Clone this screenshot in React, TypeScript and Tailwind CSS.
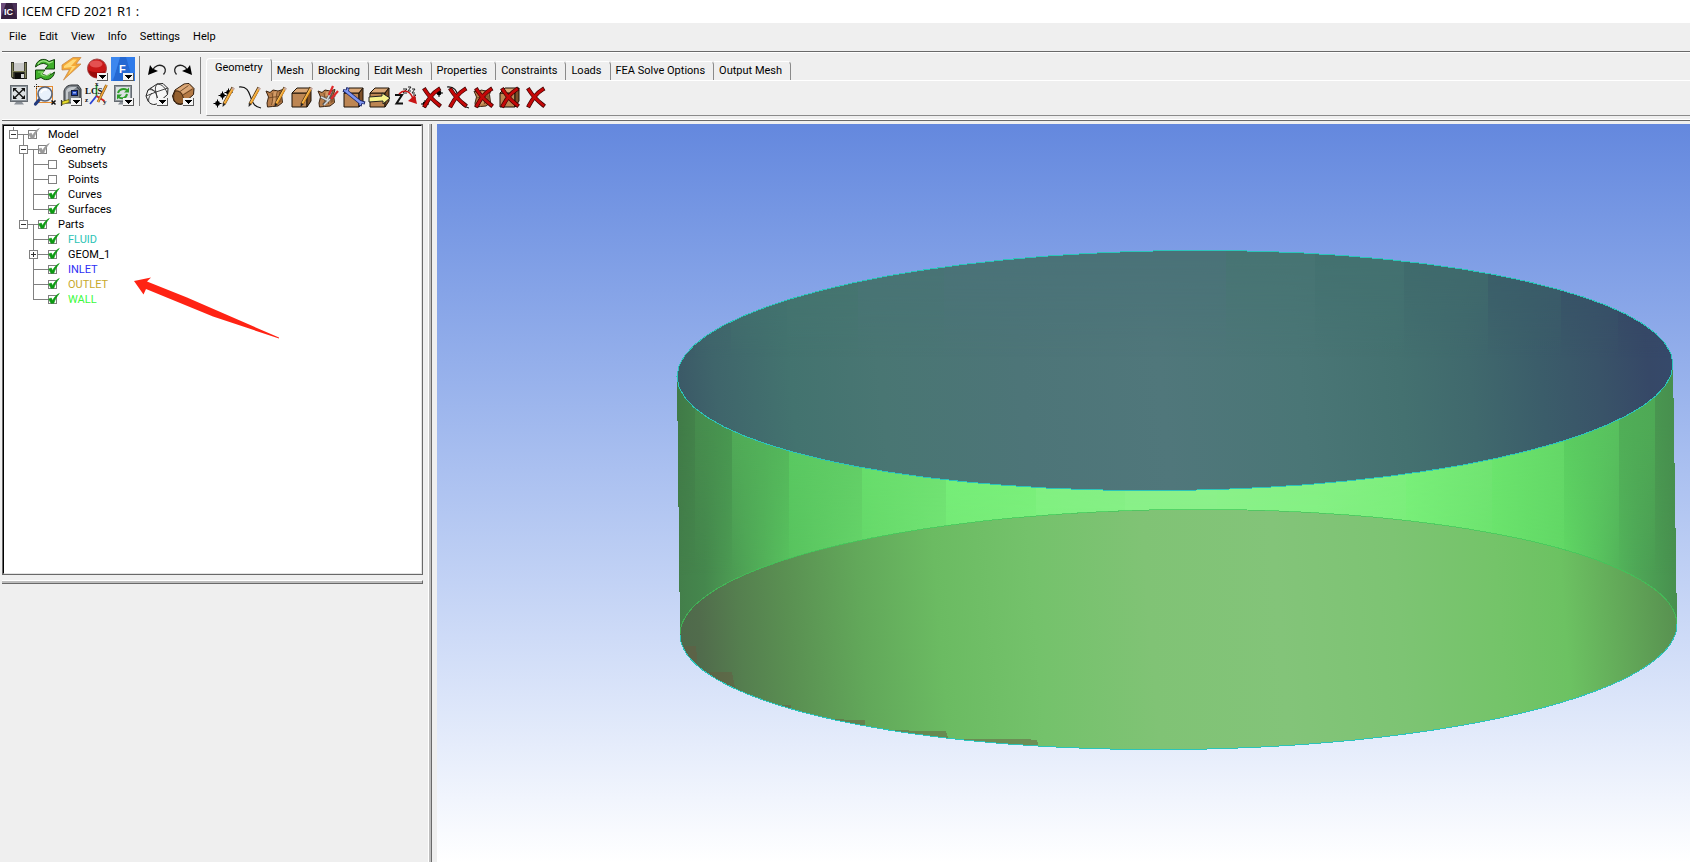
import { useState } from "react";
import type { ReactNode } from "react";

interface IconProps {
  children: ReactNode;
}

function Icon({ children }: IconProps) {
  return (
    <svg className="block h-6 w-6 overflow-visible" viewBox="0 0 24 24" fill="none" aria-hidden>
      {children}
    </svg>
  );
}

// Small "more options" flag in the corner of a tool button.
function MenuFlag() {
  return (
    <g shapeRendering="crispEdges">
      <rect x="12" y="16" width="11" height="8" fill="#5a5a5a" />
      <rect x="12" y="16" width="10" height="7" fill="#f4f4f4" />
      <path d="M14 18h7v1h-1v1h-1v1h-1v1h-1v-1h-1v-1h-1v-1h-1z" fill="#000" />
    </g>
  );
}

function Pencil() {
  return (
    <g>
      <path d="M21 2.5L12 19" stroke="#5a3a10" strokeWidth="3.2" />
      <path d="M21 3.5L12.6 18.6" stroke="#f0a02a" strokeWidth="2" />
      <path d="M20.4 3.2L12 18" stroke="#ffd27a" strokeWidth="0.7" />
      <path d="M20 3.2l2.4 1.2" stroke="#c9a9a0" strokeWidth="2" />
      <path d="M10.6 22l0.2-4 2.6 1.4z" fill="#222" />
    </g>
  );
}

function RedCross() {
  return (
    <g strokeLinecap="square">
      <path d="M5 5Q10 13 19 20M18.5 4.5Q11 9 5 20.5" stroke="#3a0000" strokeWidth="4.2" />
      <path d="M5 5Q10 13 19 20M18.5 4.5Q11 9 5 20.5" stroke="#c40808" strokeWidth="2.8" />
    </g>
  );
}

function Star({ x, y }: { x: number; y: number }) {
  return (
    <g>
      <circle cx={x} cy={y} r="2.4" fill="#000" />
      <path d={`M${x - 4} ${y}h8M${x} ${y - 4}v8`} stroke="#000" />
    </g>
  );
}

function Patch() {
  return (
    <g>
      <path
        d="M2 6l4 1.5 3-2.5 5 1 5-1.5-1.5 5 1 8-4.5 3.5-5.5 0.5-5 0.5-0.5-4 1.5-6z"
        fill="#b97f4c"
        stroke="#3a2412"
      />
      <path d="M10 7l3.5-1-1.5 12-4 2z" fill="#d39c68" />
      <path d="M8 8c1 4 1 7-0.5 12M13.5 6c-1.5 4-1.5 8-1 13M4 13l6-1 8-0.5" stroke="#6b4220" strokeWidth="0.8" />
      <path d="M15 7l2.5-1-1 4 1 6.5-3 2z" fill="#8c5a30" />
    </g>
  );
}

function Cube() {
  return (
    <g strokeLinejoin="round" stroke="#1c1208">
      <path d="M2 8h15v14H2z" fill="#bd8653" />
      <path d="M2 8l5-5h14l-4 5z" fill="#dba877" />
      <path d="M17 8l4-5v13l-4 6z" fill="#7d5029" />
    </g>
  );
}

function Monitor({ children }: IconProps) {
  return (
    <g>
      <rect x="3.5" y="3.5" width="17" height="16" fill="#8e959b" stroke="#666c72" />
      <rect x="5" y="5" width="14" height="13" fill="#dde1e3" />
      <path d="M9 20h6l2 2.5H7z" fill="#8b9198" />
      {children}
    </g>
  );
}

const SaveIcon = () => (
  <Icon>
    <path d="M4 5h16v17H6l-2-2z" fill="#2a2a22" />
    <path d="M5.5 6v14M18.5 6v15" stroke="#85865f" strokeWidth="1.5" />
    <rect x="7" y="5" width="10" height="9" fill="#c9c9c9" />
    <path d="M7 5.5h10" stroke="#eee" />
    <path d="M6 14.5h12" stroke="#77794f" />
    <rect x="8" y="16" width="9" height="6" fill="#0c0c0c" />
    <rect x="14" y="17" width="3" height="4" fill="#d8d8d8" />
  </Icon>
);

const RefreshIcon = () => {
  const arrow = "M2.5 10C3 4 10-0.5 16 4.5L21.5 2.5V12H12L15 8.5C11 5 7 6.5 2.5 10z";
  return (
    <Icon>
      <g fill="#3fae2a" stroke="#123f0c" strokeLinejoin="round">
        <path d={arrow} />
        <path d={arrow} transform="rotate(180 12 12.5)" />
      </g>
      <path d="M5 7C8 3 12 3 16 6l4-1.5" stroke="#a3e689" strokeWidth="1.3" />
      <path d="M5 15h5l-2 2c3 3 7 2 10-1" stroke="#8ddc70" strokeWidth="1.1" />
    </Icon>
  );
};

const BoltIcon = () => (
  <Icon>
    <path d="M3 8L14 0.5h8L17 7h5L4.5 23 10.5 12.5 3 13z" fill="#f4a836" stroke="#c98a4a" strokeWidth="0.8" />
    <path d="M5 9L14 2.5h4L12 9h5L9 18l4-8-8 1z" fill="#ffd978" />
  </Icon>
);

const RecordIcon = () => (
  <Icon>
    <circle cx="12" cy="11.5" r="9.5" fill="#c91818" stroke="#a34a4a" />
    <ellipse cx="11" cy="7" rx="6.5" ry="3.5" fill="#ef6a6a" opacity="0.7" />
    <path d="M3 13c3 10 14 10 18 0-4 3-13 3-18 0z" fill="#9b0c0c" />
    <MenuFlag />
  </Icon>
);

const FluentIcon = () => (
  <Icon>
    <rect width="24" height="24" fill="#2f7bea" />
    <path d="M9 0h6l7 24H2z" fill="#2468d2" />
    <path d="M0 0h9L3 20l-3 4z" fill="#3c87ee" />
    <text x="8" y="16" fill="#fff" fontSize="11" fontWeight="700" fontFamily="Liberation Sans, sans-serif">
      F
    </text>
    <MenuFlag />
  </Icon>
);

const UndoArrow = () => (
  <g>
    <path d="M18.5 17.5C25 10 13 3.5 7.5 13" stroke="#222" strokeWidth="1.3" />
    <path d="M3 18L5 8l2.5 3.5 5.5 2.5z" fill="#000" />
  </g>
);

const UndoIcon = () => (
  <Icon>
    <UndoArrow />
  </Icon>
);

const RedoIcon = () => (
  <Icon>
    <g transform="matrix(-1 0 0 1 24 0)">
      <UndoArrow />
    </g>
  </Icon>
);

const FitIcon = () => (
  <Icon>
    <Monitor>
      <path d="M8 7.5l8 8M16 7.5l-8 8" stroke="#111" strokeWidth="1.3" />
      <path d="M6 6h4l-4 4zM18 6v4l-4-4zM6 17v-4l4 4zM18 17h-4l4-4z" fill="#111" />
    </Monitor>
  </Icon>
);

const ZoomBoxIcon = () => (
  <Icon>
    <rect x="3.5" y="4.5" width="16" height="16" stroke="#e58a2e" />
    <path d="M1 4.5h5M3.5 2v5" stroke="#222" strokeDasharray="1 1" />
    <path d="M6.5 17.5l-4 4.5" stroke="#223a7c" strokeWidth="3.2" strokeLinecap="round" />
    <circle cx="12" cy="12" r="7" fill="#e9f1fb" stroke="#59657a" strokeWidth="1.6" />
    <path d="M8 11c1-3 4-4 6-3" stroke="#fff" strokeWidth="1.6" />
    <path d="M18.5 18.5l4 4M22.5 18.5l-4 4" stroke="#111" strokeWidth="1.5" />
  </Icon>
);

const MeasureIcon = () => (
  <Icon>
    <path d="M5 9c1-4 4-6 8-6h6l3 4v12l-6 2H7l-2-3z" fill="#7e848a" stroke="#2c3034" />
    <path d="M7 9c1-3 3-4 6-4h5l-4 3-5 2v8H7z" fill="#c3c8cc" />
    <path d="M18 5l3 3v11" stroke="#43484d" strokeWidth="1.2" />
    <rect x="12.5" y="8.5" width="6" height="5" fill="#2145b4" stroke="#10183a" />
    <path d="M14 10h3v1.5h-3z" fill="#9db3f5" />
    <path d="M3 19.5l7-2v3l-7 2z" fill="#e8de2c" stroke="#58540a" strokeWidth="0.7" />
    <path d="M2.5 18v6" stroke="#333" strokeWidth="1.2" />
    <MenuFlag />
  </Icon>
);

const LcsIcon = () => (
  <Icon>
    <path d="M11.5 3v12" stroke="#1f9a36" strokeWidth="1.6" />
    <path d="M11.5 14L5 22" stroke="#2a43d4" strokeWidth="1.8" />
    <path d="M11.5 14l8 5" stroke="#d42020" strokeWidth="1.8" />
    <g fontFamily="Liberation Serif, serif" fontWeight="700" fill="#111">
      <text x="0" y="12" fontSize="9">
        LCS
      </text>
      <text x="10" y="4" fontSize="7">
        x
      </text>
      <text x="0" y="20" fontSize="7">
        z
      </text>
      <text x="18" y="22" fontSize="7">
        y
      </text>
    </g>
    <path d="M21.5 3L13 20" stroke="#7a4a10" strokeWidth="2.6" />
    <path d="M21.5 3L13 20" stroke="#f3a93a" strokeWidth="1.6" />
  </Icon>
);

const RedrawIcon = () => (
  <Icon>
    <Monitor>
      <path d="M7 11c1-4 6-5 9-3M16 12c-1 5-6 5-9 3" stroke="#2f9e2a" strokeWidth="2" />
      <path d="M18 5.5v5h-5zM6 17.5v-5h5z" fill="#2f9e2a" />
    </Monitor>
    <MenuFlag />
  </Icon>
);

const WireIcon = () => (
  <Icon>
    <path
      d="M1 14L3 8 12 2l6-0.5 5 5-0.5 6L13 21c-4 3-8 1-10-2z"
      fill="#f6f6f6"
      stroke="#222"
      strokeLinejoin="round"
    />
    <path
      d="M3 8c5-2 10 3 10 13M12 2c5 0 9 4 10.5 10.5M1 14l10-4 12-4M7 11c-3 3-4 7-3 9M11 10L5 6M12 2c-2 3-2 5-1 8l2 11"
      stroke="#333"
      strokeWidth="0.9"
    />
    <MenuFlag />
  </Icon>
);

const SolidIcon = () => (
  <Icon>
    <path
      d="M1.5 14L4 8l9-6 5-0.5 5 5-0.5 6L13 21c-4 3-8 1-10-2z"
      fill="#b57a45"
      stroke="#2a180a"
      strokeLinejoin="round"
    />
    <path d="M5 8l8.5-5.5 4-0.5 4 4-9.5 6C10 9 8 8 5 8z" fill="#dba878" />
    <path d="M4 9c6-1 9 5 9 12-5 2-8 0-10-3-1-3 0-6 1-9z" fill="#94602f" stroke="#2a180a" strokeWidth="0.8" />
    <path d="M9 9.5l8.5-6M12 13l9.5-6" stroke="#5e3a1a" strokeWidth="0.8" />
    <MenuFlag />
  </Icon>
);

const geometryTools: { label: string; icon: ReactNode }[] = [
  {
    label: "Create Point",
    icon: (
      <>
        <Star x={5.5} y={18.5} />
        <Star x={10.5} y={10.5} />
        <Star x={16.5} y={7.5} />
        <Pencil />
      </>
    ),
  },
  {
    label: "Create/Modify Curve",
    icon: (
      <>
        <path d="M1 2C10 1 11 8 13 13c2 6 4 9 10 10" stroke="#111" strokeWidth="1.2" />
        <Pencil />
      </>
    ),
  },
  {
    label: "Create/Modify Surface",
    icon: (
      <>
        <Patch />
        <Pencil />
      </>
    ),
  },
  {
    label: "Create Body",
    icon: (
      <>
        <Cube />
        <Pencil />
      </>
    ),
  },
  {
    label: "Create/Modify Faceted",
    icon: (
      <>
        <Patch />
        <path d="M5 12l6 3 5-9M7 20l7-6 5-4" stroke="#555" strokeWidth="2.8" />
        <path d="M5 12l6 3 4-8M8 20l6-6" stroke="#d4dadd" strokeWidth="1.6" />
        <path d="M13 10l4-9M15 14l7-8" stroke="#e02a2a" strokeWidth="2.2" />
      </>
    ),
  },
  {
    label: "Repair Geometry",
    icon: (
      <>
        <Cube />
        <path d="M4 6l15 12" stroke="#1a2468" strokeWidth="4" />
        <path d="M1 5.5l4 1 1-4M18 21l1-4 4 1" stroke="#1a2468" strokeWidth="3.2" />
        <path d="M4 6l15 12" stroke="#7f97f0" strokeWidth="2.4" />
        <path d="M2 5.5l3 1 1-3M18 20l1-3 3 1" stroke="#7f97f0" strokeWidth="1.7" />
      </>
    ),
  },
  {
    label: "Transform Geometry",
    icon: (
      <>
        <Cube />
        <path d="M1 12l13-1V8l8 5-7 6v-3l-14 1z" fill="#f6f28a" stroke="#222" />
      </>
    ),
  },
  {
    label: "Restore Dormant",
    icon: (
      <>
        <path d="M1 10h7L2.5 18.5H9" stroke="#111" strokeWidth="2" />
        <path d="M9 4h4L9 8h4M14 2h3l-3 4h3M18 4h3l-3 4h3M19 10h3l-3 3h3" stroke="#222" />
        <path d="M5 9c6-6 12-2 14 5" stroke="#c81414" strokeWidth="1.6" />
        <path d="M23 19l-9-3 7-6z" fill="#c81414" />
      </>
    ),
  },
  {
    label: "Delete Point",
    icon: (
      <>
        <Star x={5} y={19} />
        <Star x={19} y={8} />
        <RedCross />
      </>
    ),
  },
  {
    label: "Delete Curve",
    icon: (
      <>
        <path d="M1 2C10 1 11 8 13 13c2 6 4 9 10 10" stroke="#111" strokeWidth="1.2" />
        <RedCross />
      </>
    ),
  },
  {
    label: "Delete Surface",
    icon: (
      <>
        <Patch />
        <RedCross />
      </>
    ),
  },
  {
    label: "Delete Body",
    icon: (
      <>
        <Cube />
        <RedCross />
      </>
    ),
  },
  { label: "Delete Any Entity", icon: <RedCross /> },
];

const fileTools = [
  [
    { label: "Save Project", icon: <SaveIcon /> },
    { label: "Refresh", icon: <RefreshIcon /> },
    { label: "Quick Run", icon: <BoltIcon /> },
    { label: "Record", icon: <RecordIcon /> },
    { label: "Fluent", icon: <FluentIcon /> },
  ],
  [
    { label: "Fit Window", icon: <FitIcon /> },
    { label: "Box Zoom", icon: <ZoomBoxIcon /> },
    { label: "Measure", icon: <MeasureIcon /> },
    { label: "Local Coordinate System", icon: <LcsIcon /> },
    { label: "Redraw", icon: <RedrawIcon /> },
  ],
];

const viewTools = [
  [
    { label: "Undo", icon: <UndoIcon /> },
    { label: "Redo", icon: <RedoIcon /> },
  ],
  [
    { label: "Wire Frame", icon: <WireIcon /> },
    { label: "Solid", icon: <SolidIcon /> },
  ],
];

function ToolGrid({ rows }: { rows: { label: string; icon: ReactNode }[][] }) {
  return (
    <div className="flex flex-col gap-px">
      {rows.map((row) => (
        <div key={row[0].label} className="flex gap-0.5">
          {row.map((tool) => (
            <button key={tool.label} type="button" aria-label={tool.label}>
              {tool.icon}
            </button>
          ))}
        </div>
      ))}
    </div>
  );
}

const MENUS = ["File", "Edit", "View", "Info", "Settings", "Help"];

const TABS = [
  "Mesh",
  "Blocking",
  "Edit Mesh",
  "Properties",
  "Constraints",
  "Loads",
  "FEA Solve Options",
  "Output Mesh",
];

function TitleBar() {
  return (
    <header className="flex h-[23px] shrink-0 items-center gap-[5px] bg-white pb-0.5 pl-px">
      <svg className="h-4 w-4" viewBox="0 0 16 16" aria-hidden>
        <rect width="16" height="16" fill="#4b3158" />
        <path d="M5 0h6l5 16H0z" fill="#35203f" />
        <path d="M0 0h5L0 14z" fill="#6d4d7c" />
        <text x="3" y="12" fill="#fff" fontSize="9" fontWeight="700" fontFamily="Liberation Sans, sans-serif">
          IC
        </text>
      </svg>
      <h1 className="font-['Open_Sans','Noto_Sans',sans-serif] text-[13px] leading-4">
        ICEM CFD 2021 R1 :
      </h1>
    </header>
  );
}

function MenuBar() {
  return (
    <nav className="flex h-7 shrink-0 items-center pt-px pb-0.5 pl-0.5">
      {MENUS.map((menu) => (
        <button key={menu} type="button" className="pr-1.5 pl-[7px]">
          {menu}
        </button>
      ))}
    </nav>
  );
}

function Toolbar() {
  return (
    <section className="ml-0.5 flex h-[70px] shrink-0 border-y border-[#696969]">
      <div className="flex flex-1 border-y border-white pl-[5px]">
        <div className="pt-1">
          <ToolGrid rows={fileTools} />
        </div>
        <div className="mt-[3px] ml-1 h-[50px] w-px bg-[#828282]" />
        <div className="pt-1 pl-[5px]">
          <ToolGrid rows={viewTools} />
        </div>
        <div className="mt-1 ml-[5px] h-[57px] w-px bg-[#828282]" />
        <div className="ml-[5px] flex flex-1 flex-col pt-[5px]">
          <div className="flex" role="tablist">
            <button
              type="button"
              role="tab"
              aria-selected="true"
              className="h-[23px] rounded-t-[4px] border-t border-r border-l border-t-white border-r-[#8a8a8a] border-l-white pr-2 pb-1 pl-2 whitespace-nowrap"
            >
              Geometry
            </button>
            <div className="mt-[3px] flex flex-1 border-b border-white">
              {TABS.map((tab) => (
                <button
                  key={tab}
                  type="button"
                  role="tab"
                  aria-selected="false"
                  className="h-[19px] rounded-tr-[4px] border-t border-r border-t-white border-r-[#8a8a8a] pr-2 pb-px pl-[5px] whitespace-nowrap"
                >
                  {tab}
                </button>
              ))}
            </div>
          </div>
          <div className="flex h-[35px] gap-0.5 border-b border-l border-b-[#8a8a8a] border-l-white pt-1 pl-[5px]">
            {geometryTools.map((tool) => (
              <button key={tool.label} type="button" aria-label={tool.label} className="h-6">
                <Icon>{tool.icon}</Icon>
              </button>
            ))}
          </div>
        </div>
      </div>
    </section>
  );
}

type Mark = "on" | "off" | "partial";
type Guide = "none" | "line";

interface TreeRow {
  label: string;
  guides: Guide[];
  node: "minus" | "plus" | "tee" | "end" | "root" | "last";
  parent?: boolean;
  mark: Mark;
  color?: string;
}

const TREE: TreeRow[] = [
  { label: "Model", guides: [], node: "root", parent: true, mark: "partial" },
  { label: "Geometry", guides: ["none"], node: "minus", parent: true, mark: "partial" },
  { label: "Subsets", guides: ["none", "line"], node: "tee", mark: "off" },
  { label: "Points", guides: ["none", "line"], node: "tee", mark: "off" },
  { label: "Curves", guides: ["none", "line"], node: "tee", mark: "on" },
  { label: "Surfaces", guides: ["none", "line"], node: "end", mark: "on" },
  { label: "Parts", guides: ["none"], node: "last", parent: true, mark: "on" },
  { label: "FLUID", guides: ["none", "none"], node: "tee", mark: "on", color: "text-[#2cc3b5]" },
  { label: "GEOM_1", guides: ["none", "none"], node: "plus", mark: "on" },
  { label: "INLET", guides: ["none", "none"], node: "tee", mark: "on", color: "text-[#2f2ff5]" },
  { label: "OUTLET", guides: ["none", "none"], node: "tee", mark: "on", color: "text-[#c8a92c]" },
  { label: "WALL", guides: ["none", "none"], node: "end", mark: "on", color: "text-[#3cfa3c]" },
];

// Connector lines left of a check box, drawn in 10px wide columns.
function Connector({ row }: { row: TreeRow }) {
  const width = row.guides.length * 10 + 19;
  const x = row.guides.length * 10 + 4.5;
  const boxed = row.node !== "tee" && row.node !== "end";
  const tail = row.node === "tee" || row.node === "minus" || row.node === "plus";
  return (
    <svg width={width} height="15" className="shrink-0" shapeRendering="crispEdges" fill="none" aria-hidden>
      <g stroke="#808080">
        {row.guides.map((g, i) =>
          g === "line" ? <path key={i} d={`M${i * 10 + 4.5} 0v15`} /> : null,
        )}
        <path d={`M${x} 0v${tail ? 15 : 8}M${x} 7.5H${width}`} />
        {row.parent ? <path d={`M${x + 10} 7v8`} /> : null}
        {boxed ? <rect x={x - 4} y="3.5" width="8" height="8" fill="#fff" /> : null}
      </g>
      {boxed ? <path d={`M${x - 2.5} 7.5h5`} stroke="#333" /> : null}
      {row.node === "plus" ? <path d={`M${x} 5v5`} stroke="#333" /> : null}
    </svg>
  );
}

function TreeItem({ row }: { row: TreeRow }) {
  const [mark, setMark] = useState<Mark>(row.mark);
  return (
    <li className="flex h-[15px] items-center">
      <Connector row={row} />
      <label className={`relative flex items-center gap-[11px] ${row.color ?? "text-black"}`}>
        <input
          type="checkbox"
          checked={mark !== "off"}
          onChange={() => setMark(mark === "off" ? "on" : "off")}
          className="h-[9px] w-[9px] appearance-none border border-[#808080] bg-white"
        />
        {mark === "off" ? null : (
          <svg className="absolute left-0 h-[15px] w-3" viewBox="0 0 12 15" aria-hidden>
            <path
              d="M0.7 7l2.6-1 1.2 2.5C6.2 5.5 8.5 2.5 11.3 1.5c-2.5 3-4.3 6-5.5 9.8H3z"
              fill={mark === "on" ? "#0d9a12" : "#9a9a9a"}
              stroke={mark === "on" ? "#0d9a12" : "#9a9a9a"}
              strokeWidth="0.6"
            />
          </svg>
        )}
        <span className="leading-[15px]">{row.label}</span>
      </label>
    </li>
  );
}

function ModelTree() {
  return (
    <div className="relative flex-[450] border border-[#696969]">
      <div className="h-full border border-t-black border-r-[#e3e3e3] border-b-[#e3e3e3] border-l-black bg-white">
        <ul className="pt-px pl-[5px]">
          {TREE.map((row) => (
            <TreeItem key={row.label} row={row} />
          ))}
        </ul>
      </div>
      <svg
        className="pointer-events-none absolute top-[151px] left-[130px] h-[66px] w-[148px]"
        viewBox="0 0 148 66"
        aria-hidden
      >
        <path d="M1 5l17-3.5-4 4L54 21.5l92 40v1L80 40.5 13 13 10.5 18.5z" fill="#ff2314" />
      </svg>
    </div>
  );
}

interface Ring {
  cx: number;
  cy: number;
  rx: number;
  ry: number;
  tilt: number;
}

const TOP: Ring = { cx: 1175, cy: 370.5, rx: 498, ry: 120, tilt: -6 };
const BOTTOM: Ring = { cx: 1178.5, cy: 629.5, rx: 498.5, ry: 120, tilt: -5 };

function arc(ring: Ring, from: number, to: number): string {
  const steps = 72;
  const points: string[] = [];
  for (let i = 0; i <= steps; i += 1) {
    const t = ((from + ((to - from) * i) / steps) * Math.PI) / 180;
    const x = ring.cx + ring.rx * Math.cos(t);
    const y = ring.cy + ring.ry * Math.sin(t) + ring.tilt * Math.cos(t);
    points.push(`${x.toFixed(1)} ${y.toFixed(1)}`);
  }
  return points.join("L");
}

const topPath = `M${arc(TOP, 0, 360)}Z`;
const bottomPath = `M${arc(BOTTOM, 0, 360)}Z`;
const wallPath = `M${arc(TOP, 180, 0)}L${arc(BOTTOM, 0, 180)}Z`;

// [x, colour] along the wall, seen from left to right.
const WALL_STOPS: [number, string][] = [
  [677, "#437e4a"],
  [705, "#45874d"],
  [732, "#4c9b53"],
  [789, "#58c25e"],
  [862, "#65d669"],
  [946, "#72e674"],
  [1036, "#7df07d"],
  [1125, "#87f087"],
  [1217, "#8bf18a"],
  [1315, "#84f083"],
  [1406, "#78ee78"],
  [1492, "#6be46d"],
  [1564, "#61d865"],
  [1600, "#58c25e"],
  [1635, "#4fa857"],
  [1677, "#478f4e"],
];

const WALL_FACETS: [number, number, string, string][] = [
  [677, 695, "#407a47", "#43824a"],
  [695, 732, "#468b4d", "#489750"],
  [732, 789, "#50ab57", "#54b65b"],
  [789, 862, "#5aca62", "#62cb66"],
  [862, 946, "#68e06c", "#70df72"],
  [946, 1036, "#79f27b", "#78ee79"],
  [1036, 1125, "#84f184", "#84ef84"],
  [1125, 1217, "#8bf18a", "#8bf08a"],
  [1217, 1315, "#89f188", "#86f185"],
  [1315, 1406, "#86f185", "#80ee80"],
  [1406, 1492, "#79f07a", "#73e374"],
  [1492, 1564, "#6be46d", "#65d768"],
  [1564, 1619, "#5acc60", "#58c05e"],
  [1619, 1655, "#50ae57", "#4ea955"],
  [1655, 1677, "#499650", "#478e4e"],
];

const TOP_STOPS: [number, string][] = [
  [677, "#3b5967"],
  [715, "#3f656b"],
  [790, "#43736f"],
  [880, "#497673"],
  [1020, "#4d7578"],
  [1160, "#50777b"],
  [1300, "#4a7676"],
  [1400, "#447170"],
  [1470, "#40696d"],
  [1540, "#3b5d6a"],
  [1600, "#395368"],
  [1650, "#364867"],
  [1673, "#36496a"],
];

const TOP_FACETS: [number, number, string][] = [
  [677, 695, "#3a5866"],
  [695, 731, "#3e656b"],
  [731, 787, "#41716e"],
  [787, 858, "#44746f"],
  [858, 944, "#487375"],
  [944, 1226, "#4a7278"],
  [1226, 1315, "#477473"],
  [1315, 1404, "#437170"],
  [1404, 1488, "#3f6a6c"],
  [1488, 1561, "#3a5d69"],
  [1561, 1618, "#375167"],
  [1618, 1673, "#354765"],
];

const BOTTOM_STOPS: [number, string][] = [
  [680, "#4f694b"],
  [700, "#516c4c"],
  [740, "#557f4f"],
  [789, "#5a9052"],
  [862, "#62a85a"],
  [940, "#6bbb62"],
  [1036, "#74c26b"],
  [1150, "#80c375"],
  [1280, "#83c479"],
  [1400, "#7dc473"],
  [1500, "#74c469"],
  [1565, "#6cc262"],
  [1620, "#63aa59"],
  [1677, "#589150"],
];

// Facet corners of the wall that poke through the outlet surface.
const SLIVERS = [
  "M680 646h16l2 22h-18z",
  "M700 672h32l4 20h-36z",
  "M776 705h15v8h-15z",
  "M834 719h10v1h21v10h-31z",
  "M892 730h17v1h37l3 9h-57z",
  "M955 739h76v1h6l2 9h-84z",
];

function Stops({ stops }: { stops: [number, string][] }) {
  return (
    <>
      {stops.map(([x, color]) => (
        <stop key={x} offset={(x - 677) / 1000} stopColor={color} />
      ))}
    </>
  );
}

function Viewport() {
  return (
    <div className="min-w-0 flex-1 bg-linear-to-b from-[#6488de] to-white">
      <svg
        className="block h-full w-full"
        viewBox="437 124 1253 738"
        preserveAspectRatio="xMidYMid meet"
        role="img"
        aria-label="Cylinder geometry"
      >
        <defs>
          <linearGradient id="wall" gradientUnits="userSpaceOnUse" x1="677" x2="1677" y1="0" y2="0">
            <Stops stops={WALL_STOPS} />
          </linearGradient>
          <linearGradient id="facets" gradientUnits="userSpaceOnUse" x1="677" x2="1677" y1="0" y2="0">
            {WALL_FACETS.flatMap(([a, b, from, to]) => [
              <stop key={`${a}a`} offset={(a - 677) / 1000} stopColor={from} />,
              <stop key={`${b}b`} offset={(b - 677) / 1000} stopColor={to} />,
            ])}
          </linearGradient>
          <linearGradient id="lid" gradientUnits="userSpaceOnUse" x1="677" x2="1666" y1="375" y2="275">
            <Stops stops={TOP_STOPS} />
          </linearGradient>
          <linearGradient id="lidFacets" gradientUnits="userSpaceOnUse" x1="677" x2="1677" y1="0" y2="0">
            {TOP_FACETS.flatMap(([a, b, color]) => [
              <stop key={`${a}a`} offset={(a - 677) / 1000} stopColor={color} />,
              <stop key={`${b}b`} offset={(b - 677) / 1000} stopColor={color} />,
            ])}
          </linearGradient>
          <linearGradient id="base" gradientUnits="userSpaceOnUse" x1="677" x2="1671" y1="630" y2="550">
            <Stops stops={BOTTOM_STOPS} />
          </linearGradient>
          <linearGradient id="fade" x1="0" x2="0" y1="0" y2="1">
            <stop offset="0.35" stopColor="#fff" />
            <stop offset="0.65" stopColor="#000" />
          </linearGradient>
          <linearGradient id="lidFade" x1="0" x2="0" y1="0" y2="1">
            <stop offset="0" stopColor="#fff" />
            <stop offset="0.45" stopColor="#000" />
          </linearGradient>
          <mask id="wallMask" maskUnits="userSpaceOnUse" x="670" y="250" width="1015" height="500">
            <rect x="670" y="250" width="1015" height="500" fill="url(#fade)" />
          </mask>
          <mask id="lidMask" maskUnits="userSpaceOnUse" x="670" y="250" width="1015" height="241">
            <rect x="670" y="250" width="1015" height="241" fill="url(#lidFade)" />
          </mask>
          <clipPath id="baseClip">
            <path d={bottomPath} />
          </clipPath>
        </defs>
        <g shapeRendering="crispEdges">
          <path d={wallPath} fill="url(#wall)" />
          <path d={wallPath} fill="url(#facets)" mask="url(#wallMask)" />
          <path d={bottomPath} fill="url(#base)" />
          <g clipPath="url(#baseClip)" fill="#665c42" fillOpacity="0.5">
            {SLIVERS.map((d) => (
              <path key={d} d={d} />
            ))}
          </g>
          <path d={topPath} fill="url(#lid)" />
          <path d={topPath} fill="url(#lidFacets)" mask="url(#lidMask)" />
          <g fill="none">
            <path d={`M${arc(BOTTOM, 180, 360)}`} stroke="#3fc85a" strokeOpacity="0.7" />
            <path d={`M${arc(BOTTOM, 0, 180)}`} stroke="#2cc4ba" />
            <path d={topPath} stroke="#2cc4ba" />
          </g>
        </g>
      </svg>
    </div>
  );
}

export default function App() {
  return (
    <div className="flex h-screen flex-col overflow-hidden bg-[#efefef] font-[Roboto,'Liberation_Sans',sans-serif] text-[11px] leading-4 text-black">
      <TitleBar />
      <MenuBar />
      <Toolbar />
      <main className="flex min-h-0 flex-1 pt-[3px]">
        <aside className="flex w-[428px] shrink-0 flex-col pr-[5px] pl-0.5">
          <ModelTree />
          <div className="mt-[5px] h-1 border-t border-r border-b border-t-white border-r-[#696969] border-b-[#696969] bg-[#bdbdbd]" />
          <div className="flex-[278]" />
        </aside>
        <div className="mr-[5px] w-1 shrink-0 border-r border-l border-r-[#696969] border-l-white bg-[#bdbdbd]" />
        <Viewport />
      </main>
    </div>
  );
}
